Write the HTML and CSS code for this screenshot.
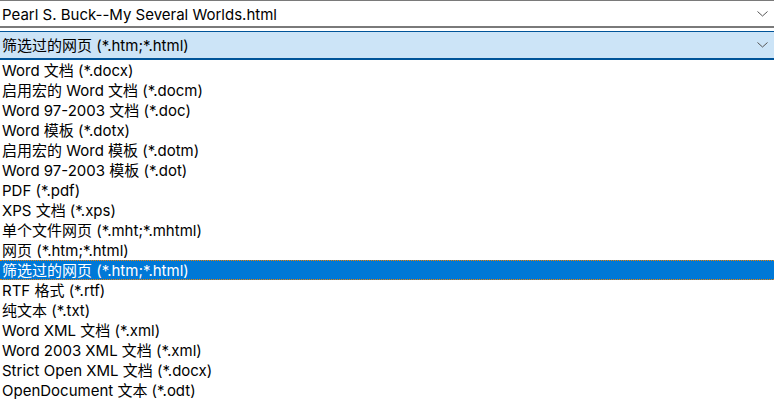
FILE: index.html
```html
<!DOCTYPE html>
<html>
<head>
<meta charset="utf-8">
<link rel="stylesheet" href="styles.css">
</head>
<body>
<div class="combo name">
  <span class="label">Pearl S. Buck--My Several Worlds.html</span>
  <svg class="chev" width="11" height="6" viewBox="0 0 11 6"><path d="M0.5 0.5 L5.5 5 L10.5 0.5" fill="none" stroke="#555" stroke-width="1"/></svg>
</div>
<div class="combo type">
  <span class="label">筛选过的网页 (*.htm;*.html)</span>
  <svg class="chev" width="11" height="6" viewBox="0 0 11 6"><path d="M0.5 0.5 L5.5 5 L10.5 0.5" fill="none" stroke="#555" stroke-width="1"/></svg>
</div>
<ul class="list">
  <li>Word 文档 (*.docx)</li>
  <li>启用宏的 Word 文档 (*.docm)</li>
  <li>Word 97-2003 文档 (*.doc)</li>
  <li>Word 模板 (*.dotx)</li>
  <li>启用宏的 Word 模板 (*.dotm)</li>
  <li>Word 97-2003 模板 (*.dot)</li>
  <li>PDF (*.pdf)</li>
  <li>XPS 文档 (*.xps)</li>
  <li>单个文件网页 (*.mht;*.mhtml)</li>
  <li>网页 (*.htm;*.html)</li>
  <li class="sel">筛选过的网页 (*.htm;*.html)</li>
  <li>RTF 格式 (*.rtf)</li>
  <li>纯文本 (*.txt)</li>
  <li>Word XML 文档 (*.xml)</li>
  <li>Word 2003 XML 文档 (*.xml)</li>
  <li>Strict Open XML 文档 (*.docx)</li>
  <li>OpenDocument 文本 (*.odt)</li>
</ul>
</body>
</html>
```
FILE: styles.css
```css
html, body {
  margin: 0;
  padding: 0;
  background: #fff;
}
body {
  font-family: "Inter", "Noto Sans CJK SC", sans-serif;
  font-size: 15px;
  color: #000;
  width: 774px;
  overflow: hidden;
}
.combo {
  display: flex;
  align-items: center;
  justify-content: space-between;
  box-sizing: border-box;
  padding: 0 2px 0 2px;
}
.name {
  height: 28px;
  border-top: 1px solid #7a7a7a;
  border-bottom: 2px solid #7a7a7a;
  margin-bottom: 3px;
}
.type {
  height: 29px;
  background: #cce4f7;
  border-top: 1px solid #005499;
  border-bottom: 2px solid #005499;
}
.label {
  line-height: 20px;
  padding-top: 2px;
}
.chev {
  margin-right: 4px;
}
.list {
  list-style: none;
  margin: 0;
  padding: 0;
}
.list li {
  height: 20px;
  line-height: 18px;
  padding: 2px 0 0 2px;
  white-space: nowrap;
  box-sizing: border-box;
}
.list li.sel {
  background: #0078d7;
  color: #fff;
  border-top: 1px dotted #f08000;
  border-bottom: 1px dotted #f08000;
  padding-top: 2px;
  line-height: 16px;
}
```
